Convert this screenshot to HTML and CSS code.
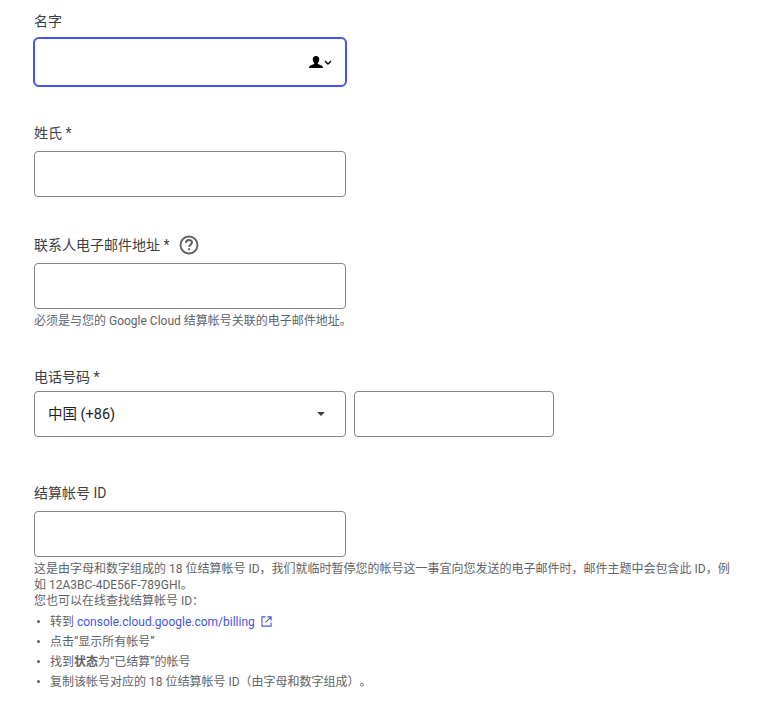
FILE: index.html
```html
<!DOCTYPE html>
<html lang="zh-CN">
<head>
<meta charset="utf-8">
<title>表单</title>
<link rel="stylesheet" href="styles.css">
</head>
<body>
<form class="form">
  <div class="field">
    <label class="label">名字</label>
    <div class="box box-focus">
      <svg class="autofill" width="24" height="14" viewBox="0 0 24 14"><path d="M7 1c2.200 0 3.300 1.400 3.300 3.300 0 1.500-.7 3-1.500 3.600v1.100c1.200.7 5.200 1 5.200 4H0c0-3 4-3.300 5.200-4V7.900C4.400 7.300 3.700 5.800 3.700 4.300 3.700 2.400 4.800 1 7 1z" fill="#000"/><path d="M16 6l3 3 3-3" fill="none" stroke="#000" stroke-width="1.400"/></svg>
    </div>
  </div>
  <div class="field">
    <label class="label">姓氏 *</label>
    <div class="box"></div>
  </div>
  <div class="field">
    <label class="label">联系人电子邮件地址 *
      <svg class="help" width="20" height="20" viewBox="0 0 20 20"><circle cx="10" cy="10" r="8.500" fill="none" stroke="#5f6368" stroke-width="1.900"/><path d="M7 8c0-1.800 1.300-2.900 3-2.900s3 1.100 3 2.500c0 1.900-2.900 2.100-2.900 4.200" fill="none" stroke="#5f6368" stroke-width="2"/><rect x="9.100" y="13.200" width="2" height="2" fill="#5f6368"/></svg>
    </label>
    <div class="box"></div>
    <p class="hint hint-single">必须是与您的 Google Cloud 结算帐号关联的电子邮件地址。</p>
  </div>
  <div class="field field-phone">
    <label class="label label-phone">电话号码 *</label>
    <div class="phone-row">
      <div class="box box-select"><span>中国 (+86)</span><i class="caret"></i></div>
      <div class="box box-phone"></div>
    </div>
  </div>
  <div class="field">
    <label class="label">结算帐号 ID</label>
    <div class="box"></div>
    <p class="hint hint-long">这是由字母和数字组成的 18 位结算帐号 ID，我们就临时暂停您的帐号这一事宜向您发送的电子邮件时，邮件主题中会包含此 ID，例如 12A3BC-4DE56F-789GHI。<br>您也可以在线查找结算帐号 ID：</p>
    <ul class="steps">
      <li>转到 <a class="link" href="#">console.cloud.google.com/billing</a>
        <svg class="ext" width="11" height="11" viewBox="0 0 12 12"><path d="M5 1H1v10h10V7M7 1h4v4M11 1L5 7" fill="none" stroke="#4355e0" stroke-width="1.200"/></svg>
      </li>
      <li>点击“显示所有帐号”</li>
      <li>找到<b>状态</b>为“已结算”的帐号</li>
      <li>复制该帐号对应的 18 位结算帐号 ID（由字母和数字组成）。</li>
    </ul>
  </div>
</form>
</body>
</html>
```

FILE: styles.css
```css
* { box-sizing: border-box; }
html, body { margin: 0; background: #fff; }
body {
  font-family: Roboto, "Noto Sans CJK SC", sans-serif;
  color: #3c4043;
  font-size: 14px;
}
.form { padding: 11px 0 0 34px; width: 730px; }
.field { margin-bottom: 38px; }
.field-phone { margin-bottom: 46px; }
.label {
  display: flex;
  align-items: center;
  gap: 9px;
  height: 20px;
  line-height: 20px;
  margin-bottom: 8px;
}
.help { flex: none; }
.box {
  width: 312px;
  height: 46px;
  border: 1px solid #80868b;
  border-radius: 4px;
  background: #fff;
}
.box-focus {
  border: 2px solid #4355e6;
  width: 314px;
  height: 50px;
  margin: -2px 0 -2px -1px;
  border-radius: 6px;
  display: flex;
  align-items: center;
  justify-content: flex-end;
  padding-right: 12px;
}
.autofill { display: block; }
.hint {
  margin: 0;
  font-size: 12px;
  line-height: 16px;
  color: #5f6368;
}
.hint-single { margin-top: 4px; }
.hint-long { margin-top: 4px; width: 700px; }
.label-phone { margin-bottom: 4px; }
.phone-row { display: flex; gap: 8px; }
.box-select {
  display: flex;
  align-items: center;
  justify-content: space-between;
  padding: 0 20px 3px 13px;
  color: #202124;
  font-size: 14.500px;
}
.caret {
  width: 0;
  height: 0;
  margin-top: 3px;
  border-left: 4px solid transparent;
  border-right: 4px solid transparent;
  border-top: 4px solid #3c4043;
}
.box-phone { width: 200px; }
.steps {
  margin: 3px 0 0;
  padding: 0 0 0 16px;
  font-size: 12px;
  line-height: 20px;
  color: #5f6368;
  list-style: none;
  text-spacing-trim: space-all;
}
.steps li { position: relative; }
.steps li::before {
  content: "";
  position: absolute;
  left: -13px;
  top: 8px;
  width: 3px;
  height: 3px;
  border-radius: 50%;
  background: #5f6368;
}
.steps b { font-weight: 700; }
.link { color: #4355e0; text-decoration: none; }
.ext { vertical-align: -1px; margin-left: 3px; }
```
